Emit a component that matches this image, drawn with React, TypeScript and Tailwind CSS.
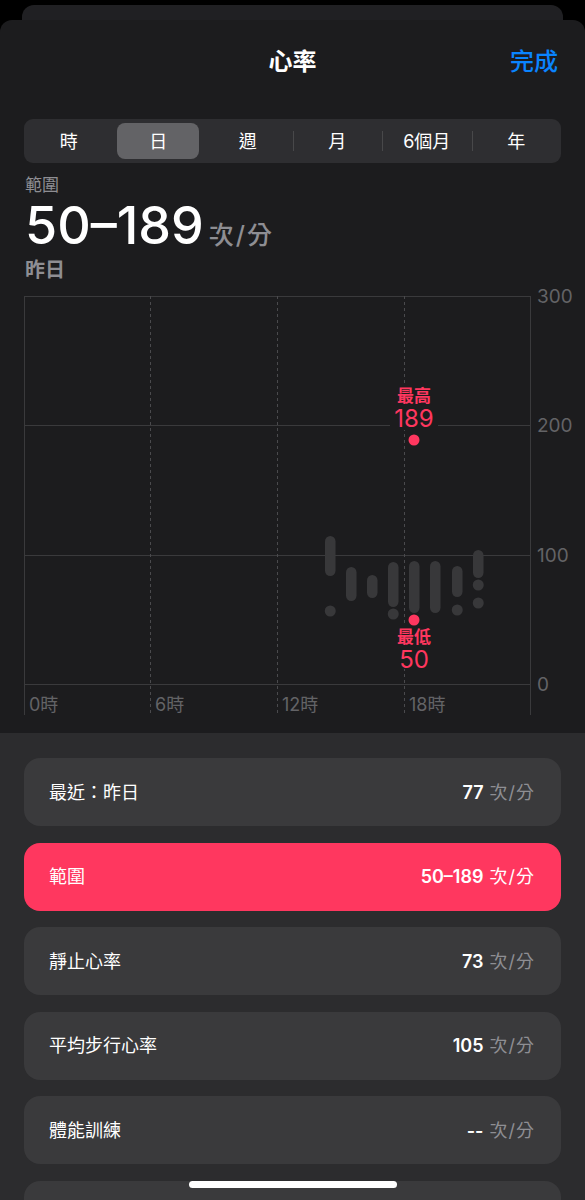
const FONT = "Inter, 'Noto Sans CJK TC', sans-serif";

const segments = ["時", "日", "週", "月", "6個月", "年"];

type Row = { label: string; value: string; active?: boolean };

const rows: Row[] = [
  { label: "最近：昨日", value: "77" },
  { label: "範圍", value: "50–189", active: true },
  { label: "靜止心率", value: "73" },
  { label: "平均步行心率", value: "105" },
  { label: "體能訓練", value: "--" },
  { label: "", value: "" },
];

// bars in page x, local y (chart top = page y 290)
const bars = [
  { x: 325, y: 246, h: 40 },
  { x: 346, y: 277, h: 34 },
  { x: 367, y: 285, h: 23 },
  { x: 388, y: 272, h: 45 },
  { x: 409, y: 271, h: 52 },
  { x: 430, y: 271, h: 52 },
  { x: 452, y: 276, h: 31 },
  { x: 473, y: 260, h: 28 },
];

const dots = [
  { cx: 330, cy: 321 },
  { cx: 393, cy: 324 },
  { cx: 457, cy: 320 },
  { cx: 478, cy: 295 },
  { cx: 478, cy: 313 },
];

function Chart() {
  const grid = "#3a3a3c";
  const label = "#636366";
  return (
    <svg
      width="585"
      height="443"
      viewBox="0 0 585 443"
      overflow="visible"
      className="block overflow-visible"
      style={{ fontFamily: FONT }}
    >
      {/* horizontal grid */}
      {[6, 135, 265, 394].map((y) => (
        <line key={y} x1="24" x2="530" y1={y + 0.5} y2={y + 0.5} stroke={grid} strokeWidth="1" />
      ))}
      <line x1="24.5" x2="24.5" y1="6" y2="425" stroke={grid} strokeWidth="1" />
      <line x1="530.5" x2="530.5" y1="6" y2="425" stroke={grid} strokeWidth="1" />
      {[150.5, 277.5, 404.5].map((x) => (
        <line key={x} x1={x} x2={x} y1="6" y2="425" stroke="#4a4a4d" strokeWidth="1" strokeDasharray="3 3" />
      ))}

      {/* y labels */}
      <g fill={label} fontSize="19">
        <text x="537" y="13">300</text>
        <text x="537" y="142">200</text>
        <text x="537" y="272">100</text>
        <text x="537" y="401">0</text>
      </g>

      {/* x labels */}
      <g fill={label} fontSize="18">
        <text x="29" y="421">0時</text>
        <text x="155" y="421">6時</text>
        <text x="282" y="421">12時</text>
        <text x="409" y="421">18時</text>
      </g>

      {/* bars */}
      {bars.map((b) => (
        <rect key={b.x} x={b.x} y={b.y} width="10.5" height={b.h} rx="5.25" fill="#38383a" />
      ))}
      {dots.map((d, i) => (
        <circle key={i} cx={d.cx + 0.25} cy={d.cy} r="5.5" fill="#38383a" />
      ))}

      {/* max / min */}
      <rect x="390" y="93" width="48" height="47" fill="#1c1c1e" />
      <text x="414" y="112" textAnchor="middle" fill="#ff375f" fontSize="17" fontWeight="600">最高</text>
      <text x="414" y="137" textAnchor="middle" fill="#ff375f" fontSize="24">189</text>
      <circle cx="414" cy="150" r="5.5" fill="#ff375f" />

      <rect x="392" y="336" width="44" height="43" fill="#1c1c1e" />
      <circle cx="414" cy="330" r="5.5" fill="#ff375f" />
      <text x="414" y="353" textAnchor="middle" fill="#ff375f" fontSize="17" fontWeight="600">最低</text>
      <text x="414" y="378" textAnchor="middle" fill="#ff375f" fontSize="24">50</text>
    </svg>
  );
}

export default function App() {
  return (
    <main
      className="relative h-[1200px] w-[585px] overflow-hidden bg-black text-white"
      style={{ fontFamily: FONT }}
    >
      <div className="px-[22px] pt-[5px]">
        <div className="h-[15px] rounded-t-[12px] bg-[#202023]" />
      </div>

      <div className="rounded-t-[12px] bg-[#1c1c1e]">
        <header className="relative flex h-[84px] items-center justify-center">
          <h1 className="text-[24px] font-semibold">心率</h1>
          <button className="absolute right-[27px] text-[24px] font-medium text-[#0a84ff]">完成</button>
        </header>

        <div className="mx-[24px] mt-[15px] grid h-[44px] grid-cols-6 rounded-[9px] bg-[#2e2e31]">
          {segments.map((s, i) => (
            <div key={s} className="relative flex items-center justify-center">
              {i === 1 && (
                <div className="absolute inset-y-[4px] left-[3px] right-[4px] rounded-[8px] bg-[#636366]" />
              )}
              <span className="relative text-[18px]">{s}</span>
              {i >= 3 && <div className="absolute left-0 top-[12px] h-[20px] w-px bg-[#48484a]" />}
            </div>
          ))}
        </div>

        <div className="px-[25px]">
          <p className="mt-[11px] text-[17px] leading-[22px] text-[#8e8e93]">範圍</p>
          <div className="mt-[2px] flex h-[56px] items-baseline gap-[5px] leading-[56px]">
            <span className="text-[52px] font-medium">50–189</span>
            <span className="text-[25px] font-medium tracking-[2px] text-[#8e8e93]">次/分</span>
          </div>
          <p className="mt-[3px] text-[20px] font-semibold leading-[26px] text-[#8e8e93]">昨日</p>
        </div>

        <div className="mt-[7px]">
          <Chart />
        </div>
      </div>

      <section className="flex flex-col gap-[16.5px] bg-[#2c2c2e] px-[24px] pt-[25px] pb-[40px]">
        {rows.map((r, i) => (
          <div
            key={i}
            className={`flex h-[68px] items-center justify-between rounded-[16px] pl-[25px] pr-[26px] ${
              r.active ? "bg-[#ff375f]" : "bg-[#3a3a3c]"
            }`}
          >
            <span className="text-[18px]">{r.label}</span>
            {r.value && (
              <span className="text-[18px]">
                <span className="font-semibold">{r.value}</span>
                <span
                  className={
                    r.active ? "ml-[6px] tracking-[1px] text-white" : "ml-[6px] tracking-[1px] text-[#8e8e93]"
                  }
                >
                  次/分
                </span>
              </span>
            )}
          </div>
        ))}
      </section>

      <div className="absolute bottom-[12px] left-[189px] h-[7px] w-[208px] rounded-full bg-white" />
    </main>
  );
}
